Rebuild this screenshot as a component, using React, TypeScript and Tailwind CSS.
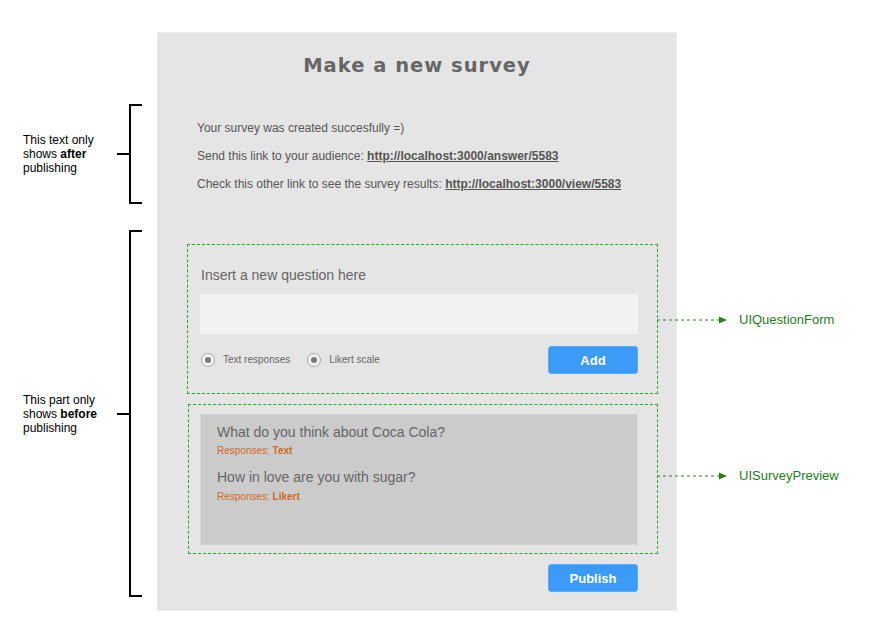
import React from "react";

const sans = { fontFamily: '"Liberation Sans", Arial, sans-serif' };

function Bracket({ height, children }: { height: string; children: React.ReactNode }) {
  return (
    <div className="flex items-center">
      <div className="w-[94px] text-[12px] leading-[14px] text-black">{children}</div>
      <div className="w-[12px] h-[2px] bg-black" />
      <div className={`w-[13px] ${height} border-l-2 border-t-2 border-b-2 border-black`} />
    </div>
  );
}

function Arrow({ top, label }: { top: string; label: string }) {
  return (
    <div className={`absolute left-full ${top} h-[14px] flex items-center`}>
      <svg width="70" height="10" viewBox="0 0 70 10" className="block">
        <line x1="0" y1="5" x2="63" y2="5" stroke="#2e7d1e" strokeWidth="1" strokeDasharray="3 3" />
        <polygon points="62,1.5 70,5 62,8.5" fill="#2e7d1e" />
      </svg>
      <span className="ml-[12px] text-[13px] leading-[14px] text-[#267d1c] whitespace-nowrap">{label}</span>
    </div>
  );
}

function Radio({ label }: { label: string }) {
  return (
    <div className="flex items-center">
      <div className="w-[14px] h-[14px] rounded-full border border-[#a8a8a8] bg-[#f3f3f3] flex items-center justify-center">
        <div className="w-[6px] h-[6px] rounded-full bg-[#7a7a7a]" />
      </div>
      <span className="ml-[8px] text-[10px] leading-[14px] text-[#666]">{label}</span>
    </div>
  );
}

function BlueButton({ children }: { children: React.ReactNode }) {
  return (
    <button className="w-[90px] h-[28px] rounded-[3px] bg-[#3c9bf9] border border-[#5aacfb] text-white font-bold text-[13px] leading-none flex items-center justify-center">
      {children}
    </button>
  );
}

export default function App() {
  return (
    <div className="w-[869px] h-[641px] bg-white flex items-start overflow-hidden" style={sans}>
      {/* left annotations */}
      <div className="w-[157px] shrink-0 flex flex-col pl-[23px] pt-[104px] gap-[26px]">
        <Bracket height="h-[100px]">
          This text only<br />shows <b>after</b><br />publishing
        </Bracket>
        <Bracket height="h-[367px]">
          This part only<br />shows <b>before</b><br />publishing
        </Bracket>
      </div>

      {/* panel */}
      <div className="mt-[32px] w-[520px] h-[579px] shrink-0 bg-[#e5e5e5] border border-[#ececec] flex flex-col">
        <h1
          className="mt-[21px] text-center text-[19.5px] leading-[24px] font-bold tracking-[1px] text-[#666]"
          style={{ fontFamily: '"DejaVu Sans", Verdana, sans-serif' }}
        >
          Make a new survey
        </h1>

        <div className="mt-[42px] ml-[39px] flex flex-col gap-[12px] text-[12px] leading-[16px] text-[#555]">
          <p>Your survey was created succesfully =)</p>
          <p>
            Send this link to your audience: <a className="font-bold underline">http://localhost:3000/answer/5583</a>
          </p>
          <p>
            Check this other link to see the survey results:{" "}
            <a className="font-bold underline">http://localhost:3000/view/5583</a>
          </p>
        </div>

        {/* UIQuestionForm */}
        <div className="relative mt-[52px] ml-[29px] w-[471px] h-[150px] border border-dashed border-[#22aa22] pl-[12px] pt-[21px]">
          <div className="ml-[1px] text-[14px] leading-[18px] text-[#666]">Insert a new question here</div>
          <div className="mt-[10px] w-[438px] h-[40px] bg-[#f2f2f2]" />
          <div className="mt-[12px] w-[438px] flex items-center justify-between">
            <div className="flex items-center gap-[17px] pl-[1px]">
              <Radio label="Text responses" />
              <Radio label="Likert scale" />
            </div>
            <BlueButton>Add</BlueButton>
          </div>
          <Arrow top="top-[68px]" label="UIQuestionForm" />
        </div>

        {/* UISurveyPreview */}
        <div className="relative mt-[10px] ml-[30px] w-[470px] h-[150px] border border-dashed border-[#22aa22] pl-[11px] pt-[9px]">
          <div className="w-[438px] h-[131px] bg-[#cbcbcb] border border-[#d6d6d6] pl-[16px] pt-[8px]">
            <div className="text-[14px] leading-[18px] text-[#666]">What do you think about Coca Cola?</div>
            <div className="mt-[4px] text-[10px] leading-[12px] text-[#d0691f]">
              Responses: <b>Text</b>
            </div>
            <div className="mt-[11px] text-[14px] leading-[18px] text-[#666]">How in love are you with sugar?</div>
            <div className="mt-[5px] text-[10px] leading-[12px] text-[#d0691f]">
              Responses: <b>Likert</b>
            </div>
          </div>
          <Arrow top="top-[64px]" label="UISurveyPreview" />
        </div>

        <div className="mt-[10px] ml-[390px]">
          <BlueButton>Publish</BlueButton>
        </div>
      </div>
    </div>
  );
}
